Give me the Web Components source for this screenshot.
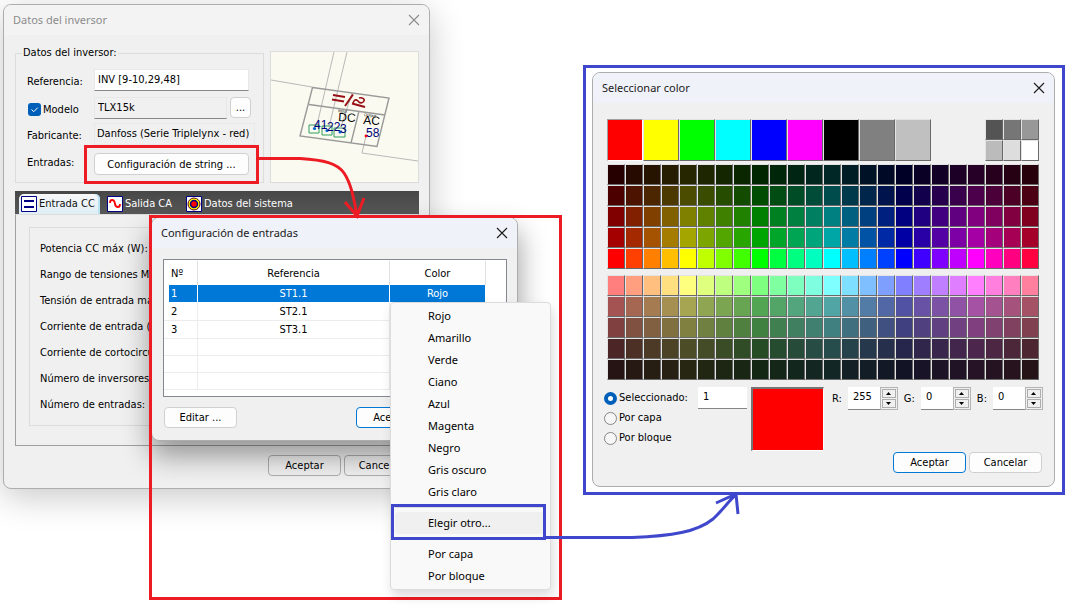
<!DOCTYPE html>
<html lang="es">
<head>
<meta charset="utf-8">
<title>Configuración de inversor</title>
<style>
html, body { margin: 0; background: #fff; }
</style>
</head>
<body>
<design-desktop></design-desktop>
<script>
const reset = `
  :host { box-sizing: border-box; }
  *, *::before, *::after { box-sizing: border-box; }
  button, input { font: inherit; color: inherit; margin: 0; }
`;

function define(name, css, html, setup) {
  const template = document.createElement('template');
  template.innerHTML = `<style>${reset}${css}</style>${html}`;
  customElements.define(name, class extends HTMLElement {
    constructor() {
      super();
      this.attachShadow({ mode: 'open' }).append(template.content.cloneNode(true));
    }
    connectedCallback() {
      if (setup && !this.ready) { this.ready = true; setup(this, this.shadowRoot); }
    }
  });
}

/* Dialog window with a title bar and a close button */
define('dialog-window', `
  :host { display: flex; flex-direction: column; background: #f0f0f0; border: 1px solid #adadad;
    border-radius: 8px; overflow: hidden; color: #000; }
  header { display: flex; align-items: center; justify-content: space-between; height: 30px; flex: none;
    padding: 0 8px 0 9px; background: #f0f2f9; font: 11px/16px "Noto Sans", sans-serif; color: #1a1a1a; }
  :host([inactive]) header { background: #f3f3f3; color: #8c8c8c; }
  h2 { margin: 0; font: inherit; }
  button { display: grid; place-items: center; width: 14px; height: 14px; padding: 0; border: 0; background: none; }
  svg { display: block; }
  slot { display: block; flex: 1; }
`, `
  <header><h2></h2><button type="button" aria-label="Cerrar"><svg width="12" height="12" viewBox="0 0 12 12">
    <path d="M1 1 L11 11 M11 1 L1 11" stroke="currentColor" stroke-width="1.1" fill="none"/></svg></button></header>
  <slot></slot>
`, (host, root) => { root.querySelector('h2').textContent = host.getAttribute('heading'); });

/* Push button */
define('push-button', `
  :host { display: block; width: 73px; height: 21px; }
  :host([wide]) { width: 100%; }
  button { display: block; width: 100%; height: 100%; padding: 0; border: 1px solid #d0d0d0; border-radius: 4px;
    background: #fdfdfd; white-space: nowrap; line-height: 19px; }
  :host([primary]) button { border-color: #0078d4; }
  :host([shaded]) button { background: none; border-color: #adadad; }
`, `<button type="button"><slot></slot></button>`);

/* General data of the inverter */
define('inverter-form', `
  :host { display: block; }
  fieldset { height: 137px; margin: 0; padding: 9px 14px 0 11px; border: 1px solid #dcdcdc; }
  legend { margin-left: -5px; padding: 0 1px; line-height: 14px; }
  .grid { display: grid; grid-template-columns: 67px 1fr; grid-template-rows: 28px 26px 30px 22px; }
  .grid > * { height: 22px; }
  label, .caption { display: flex; align-items: center; padding-top: 3px; white-space: nowrap; }
  .caption { padding: 0; height: 20px; }
  input[type=text] { width: 100%; height: 22px; padding: 0 3px 2px; border: 1px solid #e8e8e8; background: #fff; border-bottom-color: #868686; }
  input[readonly] { background: #f0f0f0; }
  .model { display: flex; gap: 3px; margin-right: -2px; }
  .model input { flex: 1; min-width: 0; }
  .model push-button { width: 21px; }
  .maker { margin-right: -6px; }
  input#maker { padding: 0 2px 2px; border-bottom-color: #e8e8e8; }
  input[type=checkbox] { appearance: none; width: 13px; height: 13px; margin: 0 2px 0 1px; border-radius: 3px;
    background: #005fb8 url("data:image/svg+xml,%3Csvg xmlns='http://www.w3.org/2000/svg' viewBox='0 0 13 13'%3E%3Cpath d='M3.5 6.5 L5.7 8.7 L9.7 4.7' fill='none' stroke='white' stroke-width='1'/%3E%3C/svg%3E"); }
`, `
  <fieldset><legend>Datos del inversor:</legend><div class="grid">
    <label for="ref">Referencia:</label><input type="text" id="ref" value="INV [9-10,29,48]">
    <label><input type="checkbox" checked>Modelo</label>
    <div class="model"><input type="text" readonly aria-label="Modelo" value="TLX15k"><push-button>...</push-button></div>
    <label for="maker">Fabricante:</label><div class="maker"><input type="text" id="maker" readonly value="Danfoss (Serie Triplelynx - red)"></div>
    <span class="caption">Entradas:</span><push-button wide>Configuración de string ...</push-button>
  </div></fieldset>
`);

/* Drawing of the inverter block */
define('inverter-preview', `
  :host { display: block; width: 149px; height: 132px; border: 1px solid #dcdcdc; background: #fafaf0; }
  svg { display: block; font-family: "Liberation Sans", sans-serif; }
`, `
  <svg width="147" height="130" viewBox="271 52 147 130" role="img" aria-label="Inversor">
    <g fill="none" stroke="#b8b8b8" stroke-width="1">
      <path d="M271 80 L312 87 M334 52 L317 125 M347 52 L329 127 M352 93 L341 127 M366 136 L362 153 L418 161"/></g>
    <g fill="none" stroke="#999" stroke-width="1.4">
      <path d="M312.500 87.500 L389 98 L377 146.500 L300 136 Z M309 104.500 L385 115 M359 111 L351 143"/></g>
    <g fill="none" stroke="#2fa05a" stroke-width="1">
      <path d="M309 125 h10 v8 h-10 z M322 126 h10 v9 h-10 z M334 128 h11 v9 h-11 z"/></g>
    <g fill="none" stroke="#990f16" stroke-width="2">
      <path d="M333 95 L345 97 M332 99.500 L344 101.500 M353 94.500 L345 106"/>
      <path d="M352 103.500 L365 107" /><path d="M353 103 L354 101 C355 99 357 100 358 101 C360 104 363 103 364 101 C365 99 362 97 359 98" stroke-width="1.600"/></g>
    <circle cx="314.500" cy="128.500" r="1.600" fill="#06c"/><circle cx="327" cy="130.500" r="1.600" fill="#06c"/>
    <circle cx="340" cy="132" r="1.600" fill="#06c"/><circle cx="366" cy="136" r="1.400" fill="#f00"/>
    <text x="338" y="121" font-size="12" transform="rotate(4 338 121)">DC</text>
    <text x="363" y="124" font-size="12" transform="rotate(4 363 124)">AC</text>
    <text x="338" y="112" font-size="4" transform="rotate(6 338 112)">Input</text>
    <text x="364" y="116" font-size="4" transform="rotate(6 364 116)">Output</text>
    <g fill="#000078" font-size="12"><text x="314" y="129">41</text><text x="327" y="131">22</text><text x="340" y="133">3</text><text x="366" y="137">58</text></g>
  </svg>
`);

/* Tabs with the electrical characteristics */
define('data-tabs', `
  :host { display: block; }
  nav { display: flex; align-items: flex-end; height: 23px; padding-left: 4px; background: linear-gradient(#474747, #585858); color: #fff; }
  button { display: flex; align-items: center; gap: 2px; height: 20px; padding: 0 3px 1px 2px; margin-right: 5px; border: 0; background: none; white-space: nowrap; }
  button[aria-selected=true] { color: #111; border-radius: 5px 5px 0 0; background: linear-gradient(#f8f8f8, #dfeef5); box-shadow: inset -2px 0 #b9e3f1; width: 81px; }
  button:nth-child(2) { width: 74px; }
  svg { display: block; flex: none; }
  .page { height: 232px; padding: 12px 13px 0; border: 1px solid #a0a0a0; border-top-color: #ddd; }
  fieldset { height: 199px; margin: 0; padding: 8px 10px 0; border: 1px solid #dcdcdc; }
  p { margin: 0; height: 26px; line-height: 26px; white-space: nowrap; }
`, `
  <nav role="tablist">
    <button type="button" role="tab" aria-selected="true"><svg width="16" height="16" viewBox="0 0 16 16"><path d="M.5.5h15v15H.5z" fill="#fff" stroke="#000080"/><path d="M3 5h10M3 11h10" stroke="#000080" stroke-width="2"/></svg>Entrada CC</button>
    <button type="button" role="tab"><svg width="16" height="16" viewBox="0 0 16 16"><path d="M.5.5h15v15H.5z" fill="#fff" stroke="#000080"/><path d="M3 7 Q3 4 5 4 Q7.500 4 8 8 Q8.500 11 11 11 Q13 11 13 8" fill="none" stroke="#f00" stroke-width="1.800"/></svg>Salida CA</button>
    <button type="button" role="tab"><svg width="16" height="16" viewBox="0 0 16 16"><path d="M.5.5h15v15H.5z" fill="#fff" stroke="#000080"/><circle cx="8" cy="8" r="6" fill="#ff0" stroke="#600020"/><circle cx="8" cy="8" r="3.500" fill="#f00" stroke="#000080" stroke-width="1.500"/></svg>Datos del sistema</button>
  </nav>
  <div class="page"><fieldset aria-label="Entrada CC">
    <p>Potencia CC máx (W):</p><p>Rango de tensiones MP</p><p>Tensión de entrada má</p><p>Corriente de entrada (</p>
    <p>Corriente de cortocircu</p><p>Número de inversores</p><p>Número de entradas:</p>
  </fieldset></div>
`);

/* List of strings */
define('string-table', `
  :host { display: block; height: 138px; border: 1px solid #828790; background: #fff; overflow: hidden; padding-top: 1px; }
  table { width: 100%; border-collapse: separate; border-spacing: 0; table-layout: fixed; }
  th, td { height: 17px; padding: 0; text-align: center; font-weight: 400; line-height: 16px; border: 0 solid #ececec; border-width: 0 1px 1px 0; }
  th { height: 24px; padding-top: 1px; border-bottom: 0; border-color: #e0e0e0; }
  th:first-child, td:first-child { text-align: left; padding-left: 7px; }
  th:last-child, td:last-child { border-right: 0; }
  .on td { background: #0078d7; color: #fff; border-color: #fff; }
  .on td:first-child { background: linear-gradient(90deg, #fff 5px, #0078d7 5px); }
  .on td:last-child { background: none; }
  tbody td { padding-top: 1px; }
  .on td { height: 18px; }
  .no { width: 34px; } .color { width: 96px; } .rest { width: 20px; }
`, `
  <table><colgroup><col class="no"><col><col class="color"><col class="rest"></colgroup>
    <thead><tr><th>Nº</th><th>Referencia</th><th>Color</th><th></th></tr></thead><tbody></tbody></table>
`, (host, root) => {
  const rows = [['1', 'ST1.1', 'Rojo'], ['2', 'ST2.1', ''], ['3', 'ST3.1', ''], [], [], []];
  root.querySelector('tbody').innerHTML = rows.map((row, i) =>
    `<tr${i ? '' : ' class="on"'}>${[0, 1, 2, 3].map(c => `<td>${row[c] || ''}</td>`).join('')}</tr>`).join('');
});

/* Pop-up menu of colours */
define('color-menu', `
  :host { display: block; padding: 2px 4px; background: #f9f9f9; border: 1px solid #dcdcdc; border-radius: 4px;
    box-shadow: 2px 6px 12px rgba(0,0,0,.14); font: 11px/16px "Noto Sans", sans-serif; }
  button { display: block; width: 100%; height: 22px; padding: 0 0 0 33px; border: 0; border-radius: 4px; background: none; text-align: left; }
  button.hot { background: #f0f0f0; }
  hr { height: 1px; margin: 4px 0; border: 0; background: #dcdcdc; }
`, `
  <div role="menu"><button>Rojo</button><button>Amarillo</button><button>Verde</button><button>Ciano</button><button>Azul</button>
  <button>Magenta</button><button>Negro</button><button>Gris oscuro</button><button>Gris claro</button><hr>
  <button class="hot">Elegir otro...</button><hr><button>Por capa</button><button>Por bloque</button></div>
`);

/* Palette of indexed colours */
define('color-palette', `
  :host { display: block; }
  button { display: block; width: 100%; height: 100%; padding: 0; border: solid #696969; border-width: 1px; border-top-color: #e3e3e3; border-left-color: #e3e3e3; }
  .top { display: flex; justify-content: space-between; }
  .basic { display: grid; grid: 42px / repeat(9, 36px); }
  .basic button:first-child { border-color: #a0a0a0 #fff #fff #a0a0a0; }
  .grays { display: grid; grid: 21px 21px / repeat(3, 18px); }
  .block { display: grid; grid-template-columns: repeat(24, 1fr); grid-auto-rows: 21px; margin-top: 3px; }
  .block + .block { margin-top: 6px; }
`, `<div class="top"><div class="basic"></div><div class="grays"></div></div><div class="block"></div><div class="block"></div>`,
(host, root) => {
  const swatch = color => `<button type="button" aria-label="${color}" style="background:${color}"></button>`;
  const fill = (node, colors) => { node.innerHTML = colors.map(swatch).join(''); };
  const channel = (hue, peak, high, low) => {
    const distance = Math.abs(((hue - peak + 540) % 360) - 180);
    const share = Math.min(1, Math.max(0, (120 - distance) / 60));
    return Math.round(low + (high - low) * share);
  };
  fill(root.querySelector('.basic'), ['#ff0000', '#ffff00', '#00ff00', '#00ffff', '#0000ff', '#ff00ff', '#000000', '#808080', '#c0c0c0']);
  fill(root.querySelector('.grays'), ['#545454', '#767676', '#989898', '#bbbbbb', '#dddddd', '#ffffff']);
  const shades = [[38, 76, 128, 165, 255], [255, 165, 128, 76, 38]];
  root.querySelectorAll('.block').forEach((block, b) => {
    const colors = [];
    for (const high of shades[b]) for (let c = 0; c < 24; c++) {
      const rgb = [0, 120, 240].map(peak => channel(c * 15, peak, high, b ? Math.floor(high / 2) : 0));
      colors.push(`rgb(${rgb.join(',')})`);
    }
    fill(block, colors);
  });
});

/* Numeric box with up and down arrows */
define('spin-box', `
  :host { display: block; }
  label { display: flex; align-items: center; gap: 6px; }
  .box { display: flex; width: 50px; height: 23px; }
  input { width: 32px; min-width: 0; flex: 1; padding: 0 0 3px 5px; border: 0; border-bottom: 1px solid #868686; background: #fff; }
  .arrows { display: grid; grid-template-rows: 1fr 1fr; gap: 1px; width: 18px; padding: 1px; border: 1px solid #b4b4b4; background: #f0f0f0; }
  button { display: grid; place-items: center; padding: 0; border: 1px solid #adadad; background: #f0f0f0; }
  svg { display: block; }
`, `
  <label><span></span><div class="box"><input type="text" inputmode="numeric"><div class="arrows">
  <button type="button" aria-label="Aumentar"><svg width="5" height="3"><path d="M0 3 L2.500 0 L5 3z"/></svg></button>
  <button type="button" aria-label="Disminuir"><svg width="5" height="3"><path d="M0 0 L2.500 3 L5 0z"/></svg></button></div></div></label>
`, (host, root) => {
  root.querySelector('span').textContent = host.getAttribute('label');
  root.querySelector('input').value = host.getAttribute('value');
});

/* Selection by index, layer, block or RGB */
define('color-controls', `
  :host { display: grid; grid-template-columns: 95px 49px 1fr; gap: 0; align-items: start; }
  .modes { display: grid; grid-template-rows: repeat(3, 20px); margin-left: -3px; padding-top: 1px; }
  .modes label { display: flex; align-items: center; gap: 2px; white-space: nowrap; }
  input[type=radio] { appearance: none; width: 13px; height: 13px; border: 1px solid #868686; border-radius: 50%; background: #f6f6f6; }
  input[type=radio]:checked { border: 4px solid #005fb8; background: #fff; }
  .index { width: 49px; height: 22px; margin-left: -4px; padding: 0 5px 2px; border: 0; border-bottom: 1px solid #868686; background: #fff; }
  .rest { display: flex; align-items: flex-start; }
  .sample { width: 73px; height: 64px; background: #f00; border: solid; border-width: 2px 1px 1px 2px; border-color: #757575 #fff #fff #757575; }
  .rgb { flex: 1; display: flex; justify-content: space-between; padding-left: 8px; margin-right: -4px; }
`, `
  <div class="modes"><label><input type="radio" name="mode" checked>Seleccionado:</label><label><input type="radio" name="mode">Por capa</label><label><input type="radio" name="mode">Por bloque</label></div>
  <input class="index" type="text" aria-label="Índice de color" value="1">
  <div class="rest"><div class="sample"></div><div class="rgb"><spin-box label="R:" value="255"></spin-box><spin-box label="G:" value="0"></spin-box><spin-box label="B:" value="0"></spin-box></div></div>
`);

/* Curved arrows between the steps */
define('step-arrows', `
  :host { display: block; pointer-events: none; }
  svg { display: block; overflow: visible; }
  path { fill: none; stroke-width: 3; }
`, `
  <svg width="1071" height="608" viewBox="0 0 1071 608" aria-hidden="true">
    <path stroke="#ed1c24" d="M258 158.500 H300 C324 160 337 163 344 173 C352 185 354 201 357 215 M345 202 L357 216 L364 198"/>
    <path stroke="#3f48cc" d="M545 537.500 H632 C672 536 697 532 713 519 C724 509 729 500 736 495 M716 503 L736 494 L738 514"/>
  </svg>
`);

/* Desktop that holds the windows and the highlights over them */
define('design-desktop', `
  :host { display: block; position: relative; min-height: 100vh; overflow: hidden; background: #fff; color: #000;
    font: 11px/14px "DejaVu Sans Condensed", "DejaVu Sans", sans-serif; font-stretch: condensed; }
  dialog-window, color-menu, step-arrows, .mark { position: absolute; }
  .inverter { left: 3px; top: 4px; width: 427px; height: 485px; box-shadow: 0 8px 34px rgba(0,0,0,.22); }
  .inputs { left: 151px; top: 217px; width: 367px; height: 224px; box-shadow: 0 14px 28px 1px rgba(0,0,0,.38); }
  .picker { left: 592px; top: 72px; width: 463px; height: 415px; }
  color-menu { left: 390px; top: 302px; width: 161px; }
  step-arrows { left: 0; top: 0; }
  .body { display: flex; flex-direction: column; padding: 11px 10px 0 11px; gap: 8px; }
  .row { display: flex; gap: 6px; align-items: flex-end; }
  inverter-form { flex: 1; }
  .buttons { display: flex; justify-content: flex-end; gap: 3px; padding: 1px 2px 0 0; }
  .inputs .body { padding: 11px 10px 0 11px; gap: 9px; }
  .inputs .buttons { padding: 1px 78px 0 1px; justify-content: space-between; }
  .picker .body { padding: 16px 15px 0 14px; gap: 7px; }
  .picker .buttons { padding: 0; margin: -6px -3px 0 0; }
  .mark { border: 3px solid #ed1c24; pointer-events: none; }
  .blue { border-color: #3f48cc; }
  .m1 { left: 84px; top: 145px; width: 175px; height: 39px; }
  .m2 { left: 149px; top: 215px; width: 413px; height: 385px; }
  .m3 { left: 391px; top: 504px; width: 155px; height: 36px; }
  .m4 { left: 583px; top: 65px; width: 482px; height: 430px; }
`, `
  <dialog-window class="inverter" heading="Datos del inversor" inactive><div class="body">
    <div class="row"><inverter-form></inverter-form><inverter-preview></inverter-preview></div>
    <data-tabs></data-tabs>
    <div class="buttons"><push-button shaded>Aceptar</push-button><push-button shaded>Cancelar</push-button></div>
  </div></dialog-window>
  <dialog-window class="inputs" heading="Configuración de entradas"><div class="body">
    <string-table></string-table>
    <div class="buttons"><push-button>Editar ...</push-button><push-button primary>Aceptar</push-button></div>
  </div></dialog-window>
  <div class="mark m2"></div>
  <color-menu></color-menu>
  <dialog-window class="picker" heading="Seleccionar color"><div class="body">
    <color-palette></color-palette><color-controls></color-controls>
    <div class="buttons"><push-button primary>Aceptar</push-button><push-button>Cancelar</push-button></div>
  </div></dialog-window>
  <div class="mark m1"></div><div class="mark blue m3"></div><div class="mark blue m4"></div>
  <step-arrows></step-arrows>
`);
</script>
</body>
</html>
